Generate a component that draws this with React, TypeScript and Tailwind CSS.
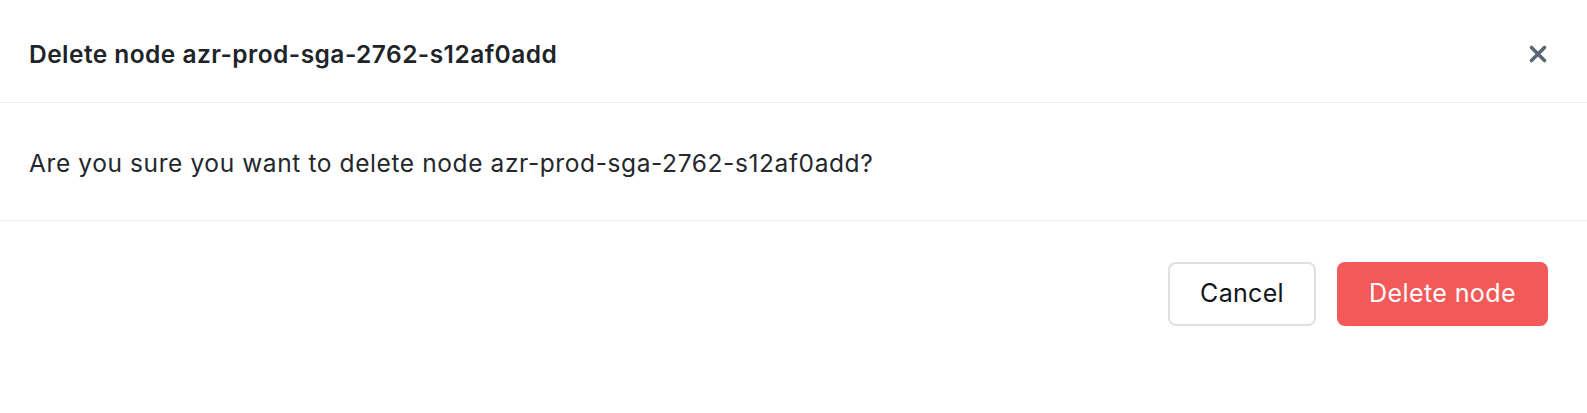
import React from 'react';

export default function App() {
  const node = 'azr-prod-sga-2762-s12af0add';
  return (
    <div className="w-[1587px] h-[413px] bg-white" style={{ fontFamily: 'Inter, "Noto Sans", sans-serif' }}>
      <div className="flex items-center justify-between h-[103px] pt-[6px] pl-[29px] pr-[39px] border-b border-[#eceef1]">
        <h2 className="text-[24.5px] font-semibold text-[#202428] tracking-[0.45px]">Delete node {node}</h2>
        <button className="w-[20px] h-[20px] flex items-center justify-center text-[#5b6675]">
          <svg viewBox="0 0 20 20" className="w-[20px] h-[20px]" fill="none" stroke="currentColor" strokeWidth={3.6} strokeLinecap="round">
            <path d="M3.5 3.5L16.5 16.5M16.5 3.5L3.5 16.5" />
          </svg>
        </button>
      </div>
      <div className="flex items-center h-[118px] pt-[3px] px-[29px] border-b border-[#eceef1]">
        <p className="text-[24.5px] text-[#24282d] tracking-[0.6px]">Are you sure you want to delete node {node}?</p>
      </div>
      <div className="flex justify-end gap-[21px] pt-[41px] pr-[39px]">
        <button className="w-[148px] h-[64px] rounded-[8px] border-2 border-[#dde1e6] bg-white text-[25px] tracking-[0.3px] text-[#111418]">
          Cancel
        </button>
        <button className="w-[211px] h-[64px] rounded-[8px] bg-[#f45959] text-[25px] tracking-[0.4px] text-white">
          Delete node
        </button>
      </div>
    </div>
  );
}
